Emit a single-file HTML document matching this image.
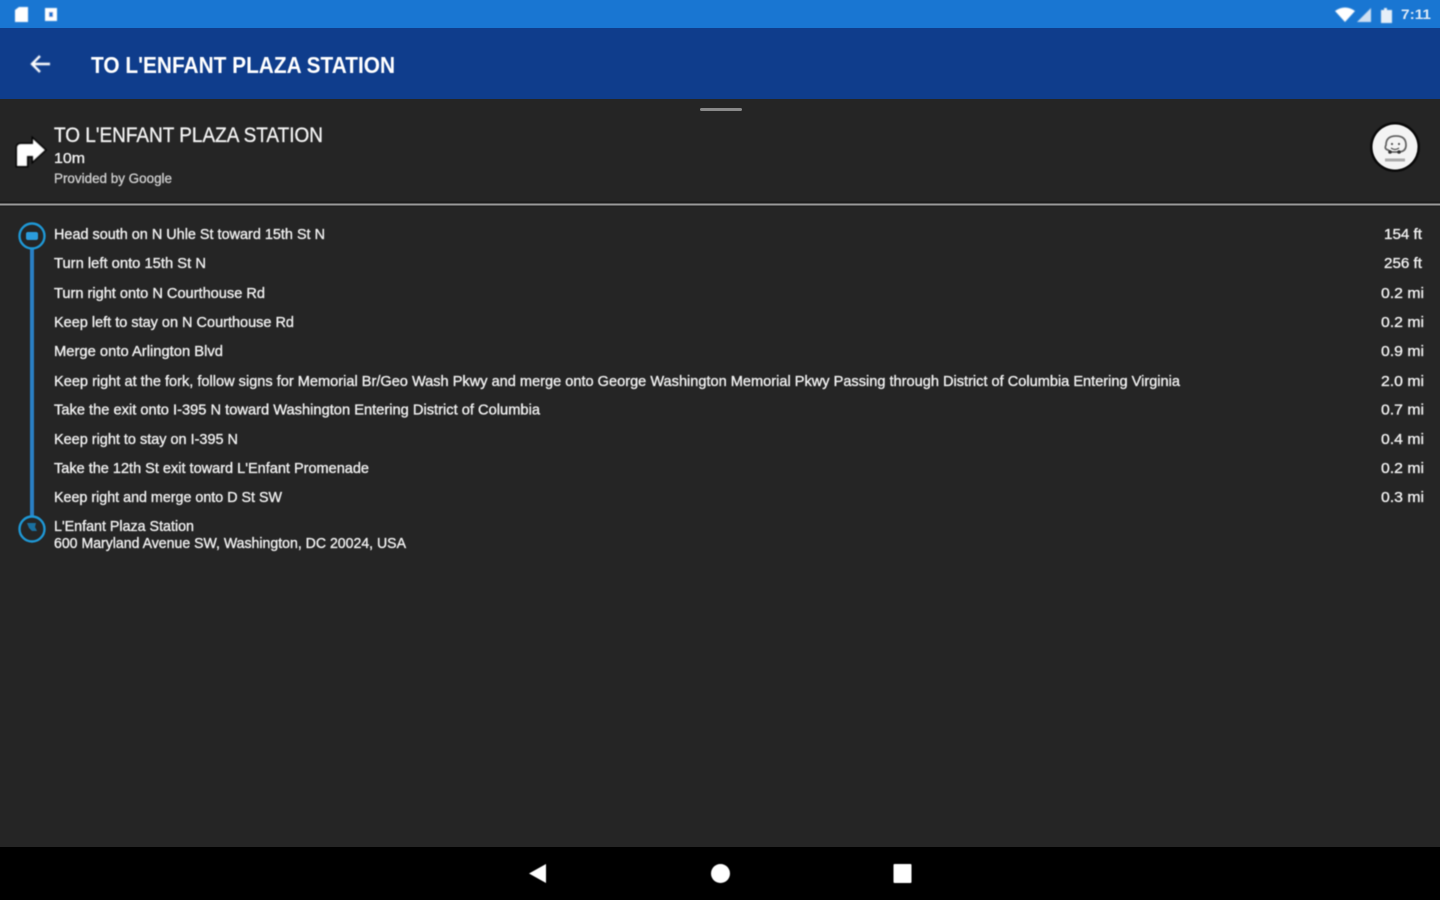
<!DOCTYPE html>
<html><head><meta charset="utf-8"><style>
html,body{margin:0;padding:0;background:#252525;width:1440px;height:900px;overflow:hidden}
svg{display:block;position:absolute;left:0;top:0}
text{font-family:"Liberation Sans",sans-serif;fill:#f0f0f0;font-size:14.5px;stroke:#f0f0f0;stroke-width:.35px}
.b{filter:url(#s)}
</style></head><body>
<svg width="1440" height="900" viewBox="0 0 1440 900" xmlns="http://www.w3.org/2000/svg">
<defs><filter id="s" x="-5%" y="-20%" width="110%" height="140%"><feGaussianBlur stdDeviation="0.6"/></filter>
<filter id="s2" x="-20%" y="-20%" width="140%" height="140%"><feGaussianBlur stdDeviation="0.8"/></filter></defs>
<rect width="1440" height="900" fill="#252525"/>
<rect width="1440" height="28" fill="#1976d2"/>
<rect y="28" width="1440" height="71" fill="#0f3d8c"/>
<rect y="847" width="1440" height="53" fill="#000"/>
<rect y="201.500" width="1440" height="5" fill="#1c1c1c"/>
<rect y="203.500" width="1440" height="2" fill="#9a9a9a"/>
<rect x="700" y="108" width="42" height="3" rx="1.5" fill="#8a8a8a"/>

<path d="M17 166V148q0-4 4-4h12v-5l12 11-12 11v-5H27v10z" fill="none" stroke="#000" stroke-width="3" filter="url(#s2)"/>
<g filter="url(#s2)" fill="#fff">
<path d="M15 10l4-3h9v15H15z"/>
<path d="M45 8h12v13H45z"/><rect x="49" y="12" width="4" height="5" fill="#1976d2"/>
<path d="M1335 11q10-7 20 0l-10 11z"/>
<path d="M1371 8v14h-14z" fill="#cfe0f2"/>
<path d="M1381 10h3v-2h3v2h5v13h-11z" fill="#e6eff8"/>
<path d="M40 56l-8 8 8 8M32 64h18" fill="none" stroke="#fff" stroke-width="2.4"/>
<path d="M17 166V148q0-4 4-4h12v-5l12 11-12 11v-5H27v10z"/>
</g>

<g class="b">
<text x="1401" y="19" textLength="30" lengthAdjust="spacingAndGlyphs" style="font-size:14px;fill:#dce9f6;font-weight:700;stroke:none">7:11</text>
<text x="91" y="73" textLength="304" lengthAdjust="spacingAndGlyphs" style="font-size:23px;font-weight:700;fill:#fff;stroke:none">TO L'ENFANT PLAZA STATION</text>
<text x="54" y="142" textLength="269" lengthAdjust="spacingAndGlyphs" style="font-size:21px;fill:#f2f2f2">TO L'ENFANT PLAZA STATION</text>
<text x="54" y="163" textLength="31" lengthAdjust="spacingAndGlyphs" style="font-size:14.5px">10m</text>
<text x="54" y="183" textLength="118" lengthAdjust="spacingAndGlyphs" style="font-size:14px;fill:#ccc;stroke:#ccc">Provided by Google</text>
<text x="54" y="239" textLength="271" lengthAdjust="spacingAndGlyphs">Head south on N Uhle St toward 15th St N</text>
<text x="54" y="268" textLength="152" lengthAdjust="spacingAndGlyphs">Turn left onto 15th St N</text>
<text x="54" y="298" textLength="211" lengthAdjust="spacingAndGlyphs">Turn right onto N Courthouse Rd</text>
<text x="54" y="327" textLength="240" lengthAdjust="spacingAndGlyphs">Keep left to stay on N Courthouse Rd</text>
<text x="54" y="356" textLength="169" lengthAdjust="spacingAndGlyphs">Merge onto Arlington Blvd</text>
<text x="54" y="386" textLength="1126" lengthAdjust="spacingAndGlyphs">Keep right at the fork, follow signs for Memorial Br/Geo Wash Pkwy and merge onto George Washington Memorial Pkwy Passing through District of Columbia Entering Virginia</text>
<text x="54" y="414.500" textLength="486" lengthAdjust="spacingAndGlyphs">Take the exit onto I-395 N toward Washington Entering District of Columbia</text>
<text x="54" y="444" textLength="184" lengthAdjust="spacingAndGlyphs">Keep right to stay on I-395 N</text>
<text x="54" y="473" textLength="315" lengthAdjust="spacingAndGlyphs">Take the 12th St exit toward L'Enfant Promenade</text>
<text x="54" y="502" textLength="228" lengthAdjust="spacingAndGlyphs">Keep right and merge onto D St SW</text>
<text x="54" y="531" textLength="140" lengthAdjust="spacingAndGlyphs">L'Enfant Plaza Station</text>
<text x="54" y="548" textLength="352" lengthAdjust="spacingAndGlyphs">600 Maryland Avenue SW, Washington, DC 20024, USA</text>
<g>
<text x="1384" y="239" textLength="38" lengthAdjust="spacingAndGlyphs">154 ft</text>
<text x="1384" y="268" textLength="38" lengthAdjust="spacingAndGlyphs">256 ft</text>
<text x="1381" y="298" textLength="43" lengthAdjust="spacingAndGlyphs">0.2 mi</text>
<text x="1381" y="327" textLength="43" lengthAdjust="spacingAndGlyphs">0.2 mi</text>
<text x="1381" y="356" textLength="43" lengthAdjust="spacingAndGlyphs">0.9 mi</text>
<text x="1381" y="386" textLength="43" lengthAdjust="spacingAndGlyphs">2.0 mi</text>
<text x="1381" y="414.500" textLength="43" lengthAdjust="spacingAndGlyphs">0.7 mi</text>
<text x="1381" y="444" textLength="43" lengthAdjust="spacingAndGlyphs">0.4 mi</text>
<text x="1381" y="473" textLength="43" lengthAdjust="spacingAndGlyphs">0.2 mi</text>
<text x="1381" y="502" textLength="43" lengthAdjust="spacingAndGlyphs">0.3 mi</text>
</g>
</g>

<g style="filter:blur(.6px)">
<rect x="30" y="248" width="4" height="270" fill="#2a7fc4"/>
<circle cx="32" cy="236" r="12.5" fill="#252525" stroke="#1f97d4" stroke-width="2.4"/>
<rect x="26" y="232" width="12" height="8" rx="2" fill="#2b9cdc"/>
<circle cx="32" cy="529" r="12.5" fill="#252525" stroke="#1f97d4" stroke-width="2.4"/>
<path d="M27 523h9l-1 4 2 4h-5l-3-3z" fill="#1a6f9f"/>
<circle cx="1395" cy="147" r="25" fill="#0a0a0a"/>
<circle cx="1395" cy="147" r="22.500" fill="#f3f3f3"/>
<path d="M1388 150q-4-1-2-5 0-9 10-9 10 0 10 9 0 7-8 7h-7z" fill="none" stroke="#666" stroke-width="1.8"/>
<circle cx="1392" cy="144" r="1.1" fill="#555"/><circle cx="1399" cy="144" r="1.1" fill="#555"/>
<path d="M1391 148q4 3 8 0" fill="none" stroke="#555" stroke-width="1.2"/>
<circle cx="1390" cy="152" r="1.8" fill="#333"/><circle cx="1399" cy="152" r="1.8" fill="#333"/>
<rect x="1385" y="158.500" width="20" height="3" fill="#aaa"/>
</g>

<g style="filter:blur(.5px)" fill="#fff">
<path d="M529 873.500l17-9.500v19z"/>
<circle cx="720.500" cy="873.500" r="9.500"/>
<rect x="893.500" y="864" width="18" height="19" rx="1"/>
</g>
</svg>
</body></html>
